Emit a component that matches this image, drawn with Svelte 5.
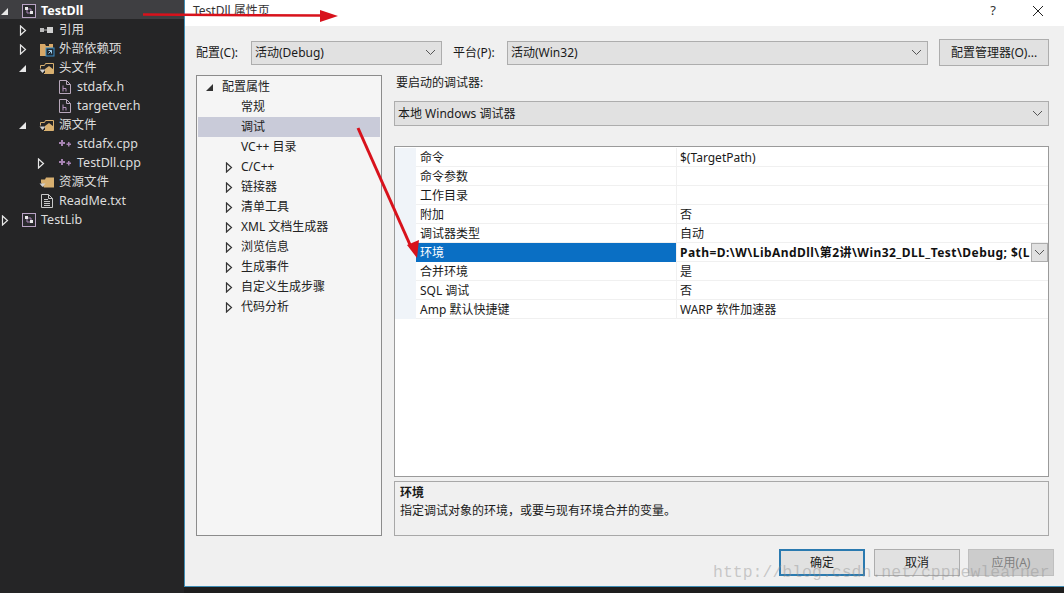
<script>
  const solution = [
    { name: "TestDll", depth: 0, icon: "project", exp: "open", bold: true, active: true },
    { name: "引用", depth: 1, icon: "refs", exp: "closed" },
    { name: "外部依赖项", depth: 1, icon: "external", exp: "closed" },
    { name: "头文件", depth: 1, icon: "filter", exp: "open" },
    { name: "stdafx.h", depth: 2, icon: "header" },
    { name: "targetver.h", depth: 2, icon: "header" },
    { name: "源文件", depth: 1, icon: "filter", exp: "open" },
    { name: "stdafx.cpp", depth: 2, icon: "cpp" },
    { name: "TestDll.cpp", depth: 2, icon: "cpp", exp: "closed" },
    { name: "资源文件", depth: 1, icon: "filter-solid" },
    { name: "ReadMe.txt", depth: 1, icon: "text" },
    { name: "TestLib", depth: 0, icon: "project", exp: "closed" }
  ];

  const pages = [
    { name: "配置属性", exp: "open", top: true },
    { name: "常规" },
    { name: "调试", selected: true },
    { name: "VC++ 目录" },
    { name: "C/C++", exp: "closed" },
    { name: "链接器", exp: "closed" },
    { name: "清单工具", exp: "closed" },
    { name: "XML 文档生成器", exp: "closed" },
    { name: "浏览信息", exp: "closed" },
    { name: "生成事件", exp: "closed" },
    { name: "自定义生成步骤", exp: "closed" },
    { name: "代码分析", exp: "closed" }
  ];

  const props = [
    { key: "命令", value: "$(TargetPath)" },
    { key: "命令参数", value: "" },
    { key: "工作目录", value: "" },
    { key: "附加", value: "否" },
    { key: "调试器类型", value: "自动" },
    { key: "环境", value: "Path=D:\\W\\LibAndDll\\第2讲\\Win32_DLL_Test\\Debug; $(L", selected: true },
    { key: "合并环境", value: "是" },
    { key: "SQL 调试", value: "否" },
    { key: "Amp 默认快捷键", value: "WARP 软件加速器" }
  ];
</script>

{#snippet chevron()}
  <svg class="chevron" width="11" height="7" viewBox="0 0 11 7"><path d="M1 1l4.5 4.5L10 1" fill="none" stroke="#555" stroke-width="1" /></svg>
{/snippet}

{#snippet arrow(kind, color)}
  <svg class="exp" width="10" height="11" viewBox="0 0 10 11">
    {#if kind === "open"}
      <path d="M8 2v7H1z" fill={color} />
    {:else if kind === "closed"}
      <path d="M2.500 1l5 4.500-5 4.500z" fill="none" stroke={color} stroke-width="1.200" />
    {/if}
  </svg>
{/snippet}

{#snippet fileIcon(kind)}
  <svg class="icon" width="16" height="16" viewBox="0 0 16 16">
    {#if kind === "project"}
      <rect x="1.500" y="1.500" width="13" height="13" fill="#2a2a2e" stroke="#b9a3c4" />
      <path d="M4 4h3v3H4zM9 8h3v3H9z" fill="#e8e8e8" />
      <path d="M7 6h3v2M6 7v3h3" fill="none" stroke="#a884b4" />
    {:else if kind === "refs"}
      <rect x="1" y="6" width="4" height="4" fill="#bbb" />
      <rect x="5" y="7.500" width="3" height="1" fill="#bbb" />
      <rect x="8" y="5" width="6" height="6" fill="#d0d0d0" />
    {:else if kind === "external"}
      <path d="M1 3h5l1 2h3V3h4v4H7v8H1z" fill="#d8a868" />
      <rect x="7" y="7" width="8" height="8" fill="#1f2b35" stroke="#3c8dc6" />
      <path d="M9.500 9.500h3v3M12.500 9.500l-3 3" fill="none" stroke="#9cc9e8" />
    {:else if kind === "filter"}
      <path d="M1.500 8.500V5.500h4l1-2h8v10H5" fill="none" stroke="#d8b070" />
      <path d="M6 13.500V9l4-3 4.500 3.500v4z" fill="#d8b070" />
      <path d="M0.500 9.500h6l-3 3.500z" fill="#d0d0d0" />
    {:else if kind === "filter-solid"}
      <path d="M2 8.500V5.500h4l1-2h8v10H5z" fill="#d8b070" />
      <path d="M0.500 9.500h6l-3 3.500z" fill="#d0d0d0" />
    {:else if kind === "header"}
      <path d="M2.500 1.500h7l4 4v9h-11z" fill="none" stroke="#b8a8bc" />
      <path d="M9.500 1.500v4h4" fill="none" stroke="#b8a8bc" />
      <path d="M6 6.500v6M6 9.500h3v3" fill="none" stroke="#b493bc" />
    {:else if kind === "cpp"}
      <path d="M2 6h2V4h2v2h2v2H6v2H4V8H2z" fill="#a884b4" />
      <path d="M9.500 7.500h1.500V6h1.500v1.500H14V9h-1.500v1.500H11V9H9.500z" fill="#a884b4" />
    {:else}
      <path d="M2.500 1.500h7l4 4v9h-11z" fill="none" stroke="#c8c8c8" />
      <path d="M9.500 1.500v4h4M5 6.500h4M5 8.500h6M5 10.500h6M5 12.500h6" fill="none" stroke="#c8c8c8" />
    {/if}
  </svg>
{/snippet}

<div class="screen">
  <aside class="solution">
    {#each solution as item}
      <div class="sol-row" class:active={item.active} style="padding-left: {item.depth * 18}px">
        {@render arrow(item.exp, "#e8e8e8")}
        {@render fileIcon(item.icon)}
        <span class:bold={item.bold}>{item.name}</span>
      </div>
    {/each}
  </aside>

  <section class="dialog">
    <header class="title">
      <span>TestDll 属性页</span>
      <span class="help">?</span>
      <svg class="close" width="12" height="12" viewBox="0 0 12 12"><path d="M1 1l10 10M11 1L1 11" stroke="#222" stroke-width="1" /></svg>
    </header>

    <div class="body">
      <div class="config">
        <span class="cfg-label">配置(C):</span>
        <div class="select cfg-first">活动(Debug){@render chevron()}</div>
        <span class="cfg-label second">平台(P):</span>
        <div class="select grow">活动(Win32){@render chevron()}</div>
        <button class="btn manager">配置管理器(O)...</button>
      </div>

      <div class="main">
        <nav class="pages">
          {#each pages as page}
            <div class="page" class:selected={page.selected} class:top={page.top}>
              {@render arrow(page.exp, "#333")}
              <span>{page.name}</span>
            </div>
          {/each}
        </nav>

        <div class="right">
          <div class="dbg-label">要启动的调试器:</div>
          <div class="select dbg">本地 Windows 调试器{@render chevron()}</div>
          <div class="grid">
            {#each props as p}
              <div class="prop" class:selected={p.selected}>
                <div class="gutter"></div>
                <div class="key">{p.key}</div>
                <div class="value">{p.value}</div>
                {#if p.selected}
                  <div class="drop">{@render chevron()}</div>
                {/if}
              </div>
            {/each}
          </div>
          <div class="desc">
            <strong>环境</strong>
            <p>指定调试对象的环境，或要与现有环境合并的变量。</p>
          </div>
        </div>
      </div>

      <footer class="actions">
        <button class="btn act ok">确定</button>
        <button class="btn act">取消</button>
        <button class="btn act off">应用(A)</button>
      </footer>
    </div>
  </section>

  <svg class="marks" width="1064" height="593" viewBox="0 0 1064 593">
    <path d="M143 14.500L320 15.500" stroke="#d8121c" stroke-width="2.500" fill="none" />
    <path d="M320 10l18 6-18 6z" fill="#d8121c" />
    <path d="M358 128L411 247" stroke="#d8121c" stroke-width="3" fill="none" />
    <path d="M417 258l-10-13 12-5z" fill="#d8121c" />
  </svg>
  <div class="watermark">http://blog.csdn.net/cppnewlearner</div>
</div>

<style>
  :global(body) {
    margin: 0;
    background: #1e1e1e;
  }

  .screen {
    position: relative;
    display: flex;
    width: 1064px;
    height: 593px;
    overflow: hidden;
    background: #1e1e1e;
    color: #1a1a1a;
    font: 12px/1 "Noto Sans", "Noto Sans CJK SC", sans-serif;
  }

  .solution {
    width: 184px;
    flex: none;
    background: #252526;
    color: #dcdcdc;
    font-size: 12.5px;
  }

  .sol-row {
    display: flex;
    align-items: center;
    box-sizing: border-box;
    height: 19px;
    padding-top: 3px;
  }
  .sol-row.active {
    background: #3f3f42;
  }
  .sol-row .exp {
    margin-right: 11px;
    flex: none;
  }
  .sol-row .icon {
    margin-right: 4px;
    flex: none;
  }
  .bold {
    font-weight: 700;
    color: #fff;
  }

  .dialog {
    display: flex;
    flex-direction: column;
    width: 879px;
    height: 586px;
    border-left: 1px solid #3f8db5;
    border-bottom: 1px solid #3f8db5;
  }

  .title {
    display: flex;
    align-items: center;
    height: 26px;
    flex: none;
    padding-left: 8px;
    background: #fff;
    color: #333;
    padding-bottom: 6px;
    box-sizing: border-box;
    padding-top: 2px;
  }
  .help {
    margin-left: auto;
    margin-right: 36px;
    font-size: 13px;
    position: relative;
    top: -1px;
  }
  .close {
    margin-right: 20px;
  }

  .body {
    flex: 1;
    display: flex;
    flex-direction: column;
    padding: 13px 10px 0 11px;
    background: #f0f0f0;
  }

  .config {
    display: flex;
    align-items: center;
    height: 27px;
    margin-right: 5px;
  }
  .cfg-label {
    width: 55px;
    flex: none;
  }
  .cfg-label.second {
    width: 54px;
    margin-left: 11px;
  }

  .select {
    display: flex;
    align-items: center;
    justify-content: space-between;
    box-sizing: border-box;
    height: 24px;
    padding: 0 5px 0 3px;
    background: #e1e1e1;
    border: 1px solid #adadad;
  }
  .cfg-first {
    width: 191px;
    flex: none;
  }
  .grow {
    flex: 1;
  }

  .btn {
    box-sizing: border-box;
    height: 27px;
    padding: 0;
    background: #e1e1e1;
    border: 1px solid #adadad;
    color: #1a1a1a;
    font: inherit;
  }
  .manager {
    width: 110px;
    flex: none;
    margin-left: 11px;
  }

  .main {
    display: grid;
    grid-template-columns: 186px 655px;
    column-gap: 12px;
    height: 461px;
    margin-top: 9px;
  }

  .pages {
    box-sizing: border-box;
    padding: 1px;
    background: #f5f5f5;
    border: 1px solid #8c8c8c;
  }
  .page {
    display: flex;
    align-items: center;
    height: 20px;
    padding-left: 26px;
    color: #222;
  }
  .page .exp {
    margin-right: 7px;
    flex: none;
    width: 10px;
  }
  .page.top {
    padding-left: 7px;
  }
  .page.top .exp {
    margin-right: 7px;
  }
  .page.selected {
    background: #c9cbd9;
  }

  .right {
    display: flex;
    flex-direction: column;
    min-width: 0;
  }
  .dbg-label {
    height: 26px;
    padding: 2px 0 0 2px;
    box-sizing: border-box;
  }
  .dbg {
    height: 25px;
    flex: none;
  }

  .grid {
    flex: 1;
    box-sizing: border-box;
    margin-top: 20px;
    padding-top: 1px;
    overflow: hidden;
    background: #fff;
    border: 1px solid #9a9a9a;
  }
  .prop {
    display: flex;
    align-items: stretch;
    height: 19px;
  }
  .gutter {
    width: 21px;
    flex: none;
    background: #f0f4f9;
  }
  .key {
    width: 260px;
    flex: none;
    box-sizing: border-box;
    padding-left: 4px;
    line-height: 20px;
    border-bottom: 1px solid #f0f0f0;
  }
  .value {
    flex: 1;
    min-width: 0;
    padding-left: 3px;
    line-height: 20px;
    white-space: nowrap;
    overflow: hidden;
    border-left: 1px solid #f0f0f0;
    border-bottom: 1px solid #f0f0f0;
  }
  .prop.selected .key {
    background: #0a6fc4;
    color: #fff;
    border-bottom-color: #0a6fc4;
  }
  .prop.selected .value {
    font-weight: 700;
    color: #111;
    letter-spacing: 0.45px;
  }
  .drop {
    display: flex;
    align-items: center;
    justify-content: center;
    box-sizing: border-box;
    width: 17px;
    flex: none;
    background: #e1e1e1;
    border: 1px solid #adadad;
  }

  .desc {
    box-sizing: border-box;
    height: 55px;
    flex: none;
    margin-top: 4px;
    padding: 5px;
    border: 1px solid #a8a8a8;
  }
  .desc strong {
    display: block;
  }
  .desc p {
    margin: 6px 0 0;
  }

  .actions {
    display: flex;
    justify-content: flex-end;
    gap: 8px;
    margin-top: 13px;
  }
  .act {
    width: 86px;
  }
  .ok {
    border: 2px solid #2a7ab0;
    margin-right: 1px;
  }
  .off {
    background: #cccccc;
    border-color: #bfbfbf;
    color: #808080;
  }

  .marks {
    position: absolute;
    inset: 0;
    pointer-events: none;
  }
  .watermark {
    position: absolute;
    left: 713px;
    top: 565px;
    color: rgba(140, 140, 140, 0.42);
    font: 16.5px/1 "Liberation Mono", monospace;
    white-space: nowrap;
    pointer-events: none;
  }
</style>
